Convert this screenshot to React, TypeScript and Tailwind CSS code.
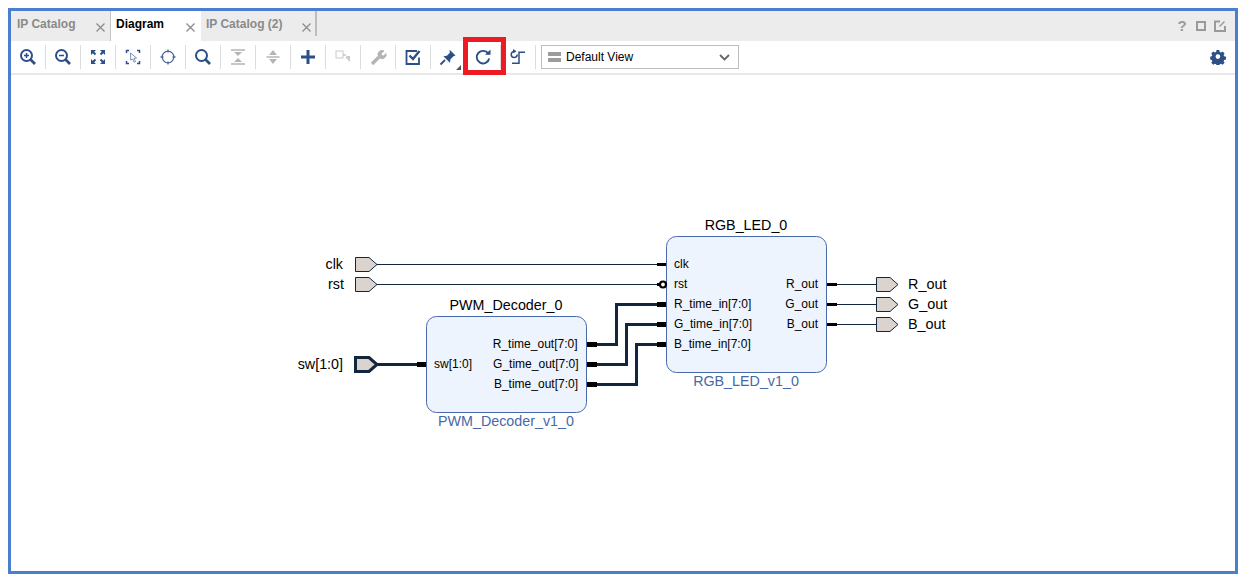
const NAVY = "#2b4f86";
const GREY = "#b4b4b4";

function Glyph({ children, color = NAVY }: { children: React.ReactNode; color?: string }) {
  return (
    <svg width="18" height="18" viewBox="0 0 18 18" fill="none" stroke={color} strokeWidth="2">
      {children}
    </svg>
  );
}

const tools: React.ReactNode[] = [
  <Glyph key="zoom-in">
    <circle cx="7.5" cy="7.5" r="5.5" />
    <path d="M5 7.5h5M7.5 5v5" strokeWidth="1.5" />
    <path d="M11.5 11.5l4.5 4.5" strokeWidth="2.6" />
  </Glyph>,
  <Glyph key="zoom-out">
    <circle cx="7.5" cy="7.5" r="5.5" />
    <path d="M5 7.5h5" strokeWidth="1.5" />
    <path d="M11.5 11.5l4.5 4.5" strokeWidth="2.6" />
  </Glyph>,
  <Glyph key="fit">
    <path d="M3 3l3.500 3.500M15 3l-3.500 3.500M3 15l3.500-3.500M15 15l-3.500-3.500" strokeWidth="2" />
    <path d="M2 2h5L2 7zM16 2h-5l5 5zM2 16h5l-5-5zM16 16h-5l5-5z" fill={NAVY} stroke="none" />
  </Glyph>,
  <Glyph key="fit-selection">
    <path d="M5 2.500H2.500V5M13 2.500h2.500V5M5 15.500H2.500V13M13 15.500h2.500V13" strokeWidth="1.500" />
    <path d="M6.500 5l6 5-2.600.4 1.700 3.200-1.400.7-1.600-3.200L6.700 12z" strokeWidth=".8" fill="#ffffff" stroke="#5a76a4" />
  </Glyph>,
  <Glyph key="target">
    <circle cx="9" cy="9" r="5.800" strokeWidth="1.300" stroke="#4a6a9c" />
    <path d="M9 1.500v3M9 13.500v3M1.500 9h3M13.500 9h3" strokeWidth="1.300" stroke="#4a6a9c" />
  </Glyph>,
  <Glyph key="search">
    <circle cx="7.5" cy="7.5" r="5.5" />
    <path d="M11.5 11.5l4.5 4.5" strokeWidth="2.6" />
  </Glyph>,
  <Glyph key="collapse" color={GREY}>
    <path d="M2 2h14M2 16h14" strokeWidth="1.5" />
    <path d="M5 4h8l-4 4zM5 14h8l-4-4z" fill={GREY} stroke="none" />
  </Glyph>,
  <Glyph key="expand" color={GREY}>
    <path d="M2.5 9h13" strokeWidth="1.5" />
    <path d="M5 7l4-5 4 5zM5 11l4 5 4-5z" fill={GREY} stroke="none" />
  </Glyph>,
  <Glyph key="add">
    <path d="M9 2v14M2 9h14" strokeWidth="3" />
  </Glyph>,
  <Glyph key="ports" color="#c8c8c8">
    <rect x="2" y="3" width="7" height="7" strokeWidth="1" />
    <path d="M9 7h3M12 9l4 4" strokeWidth="1.5" />
    <path d="M12 8h4v4z" fill="#c8c8c8" stroke="none" />
  </Glyph>,
  <Glyph key="wrench" color={GREY}>
    <path d="M3 16l7-7" strokeWidth="3.4" />
    <path d="M9 7a4 4 0 0 1 6-4l-3 2.500.6 2 2 .6L17 5.500a4 4 0 0 1-6 4.500z" fill={GREY} strokeWidth="1" />
  </Glyph>,
  <Glyph key="validate">
    <path d="M15 9.500V16H2.500V3H13" strokeWidth="1.800" />
    <path d="M5.500 7.500l3.500 3.500 6.500-8" strokeWidth="2.400" />
  </Glyph>,
  <div key="pin" className="relative flex h-[18px] w-[18px] items-center justify-center">
    <Glyph>
      <path d="M10.500 1.500l6 6-2 .8-3 3-.6 3.500-6.500-6.500 3.500-.6 3-3z" fill={NAVY} stroke="none" />
      <path d="M6 12l-4.500 4.500" strokeWidth="1.800" />
    </Glyph>
    <div className="absolute -bottom-[4px] -right-[4px] h-0 w-0 border-b-[5px] border-l-[5px] border-b-[#555555] border-l-transparent" />
  </div>,
  <Glyph key="refresh">
    <path d="M14.500 6A6.300 6.300 0 1 0 15.200 10.500" strokeWidth="1.900" />
    <path d="M11 6.800h5.500V1.500z" fill={NAVY} stroke="none" />
  </Glyph>,
  <Glyph key="regenerate">
    <circle cx="5.200" cy="6.500" r="3" strokeWidth="1.500" strokeDasharray="15 4" />
    <path d="M4 1l3.500 2.200L4 5.200z" fill={NAVY} stroke="none" />
    <path d="M3 15.300h7V4.200h6" strokeWidth="1.500" />
  </Glyph>,
];

function Tab({ label, active, width, closeGap }: { label: string; active?: boolean; width: string; closeGap: string }) {
  return (
    <div className={`flex h-full items-center justify-between pl-[5px] ${width} ${active ? "bg-white text-black" : "text-[#8a8a8a]"}`}>
      <span className="pb-[4px] text-[12px] font-bold">{label}</span>
      <svg width="9" height="9" viewBox="0 0 9 9" stroke="#8c8c8c" strokeWidth="1.300" className={`mt-[3px] ${closeGap}`}>
        <path d="M.5.5l8 8M8.500.5l-8 8" />
      </svg>
    </div>
  );
}

function Port({ x, y, thick }: { x: number; y: number; thick?: boolean }) {
  const p = `${x + 0.5},${y - 7} ${x + 14},${y - 7} ${x + 22},${y} ${x + 14},${y + 7} ${x + 0.5},${y + 7}`;
  return <polygon points={p} fill="#dbd3cd" stroke="#12263f" strokeWidth={thick ? 3 : 1} />;
}

function Block({ x, y, w, h, title, sub, titleY, subY }: { x: number; y: number; w: number; h: number; title: string; sub: string; titleY: number; subY: number }) {
  return (
    <g textAnchor="middle" fontSize="14.3">
      <rect x={x} y={y} width={w} height={h} rx="10" fill="#edf4fd" stroke="#4769a8" strokeWidth="1" />
      <text x={x + w / 2 - 0.5} y={titleY} fill="#000000">{title}</text>
      <text x={x + w / 2 - 0.5} y={subY} fill="#4769a8">{sub}</text>
    </g>
  );
}

function Diagram() {
  return (
    <svg className="block h-full w-full" viewBox="11 75 1224 496" fontFamily="'Liberation Sans', Arial, sans-serif" fill="none">
      {/* thin nets */}
      <g stroke="#12263f" strokeWidth="1">
        <path d="M376 264.500H658M376 284.500H658M837 284.500H876M837 304.500H876M837 324.500H876" />
      </g>
      {/* bus nets */}
      <g stroke="#12263f" strokeWidth="3">
        <path d="M376 364.500H418M597 344.500H616.500V304.500H657M597 364.500H626.500V324.500H657M597 384.500H636.500V344.500H657" />
      </g>
      <Block x={426.5} y={316.5} w={160} h={96} title="PWM_Decoder_0" sub="PWM_Decoder_v1_0" titleY={310} subY={426} />
      <Block x={666.5} y={236.5} w={160} h={136} title="RGB_LED_0" sub="RGB_LED_v1_0" titleY={230} subY={386} />

      {/* pin stubs */}
      <g stroke="#000000" strokeWidth="5">
        <path d="M417 364.500H426M587 344.500H597M587 364.500H597M587 384.500H597M657 304.500H666M657 324.500H666M657 344.500H666" />
      </g>
      <g stroke="#000000" strokeWidth="3">
        <path d="M657 264.500H666M827 284.500H837M827 304.500H837M827 324.500H837" />
      </g>
      <path d="M657 284.500H661" stroke="#000000" strokeWidth="3" />
      <circle cx="663" cy="284.500" r="3" fill="#ffffff" stroke="#000000" strokeWidth="2.200" />

      <Port x={355} y={264.5} />
      <Port x={355} y={284.5} />
      <Port x={355} y={364.5} thick />
      <Port x={876} y={284.5} />
      <Port x={876} y={304.5} />
      <Port x={876} y={324.5} />

      <g fontSize="14.3" fill="#000000" textAnchor="end">
        <text x="343" y="269">clk</text>
        <text x="344" y="289">rst</text>
        <text x="343" y="369">sw[1:0]</text>
      </g>
      <g fontSize="14.4" fill="#000000">
        <text x="908" y="289">R_out</text>
        <text x="908" y="309">G_out</text>
        <text x="908" y="329">B_out</text>
      </g>
      <g fontSize="12" fill="#000000">
        <text x="434" y="368">sw[1:0]</text>
        <text x="674" y="268">clk</text>
        <text x="674" y="288">rst</text>
        <text x="674" y="308">R_time_in[7:0]</text>
        <text x="674" y="328">G_time_in[7:0]</text>
        <text x="674" y="348">B_time_in[7:0]</text>
      </g>
      <g fontSize="12" fill="#000000" textAnchor="end">
        <text x="577.500" y="348">R_time_out[7:0]</text>
        <text x="578.500" y="368">G_time_out[7:0]</text>
        <text x="578" y="388">B_time_out[7:0]</text>
        <text x="818" y="288">R_out</text>
        <text x="818" y="308">G_out</text>
        <text x="818" y="328">B_out</text>
      </g>
    </svg>
  );
}

export default function App() {
  return (
    <div className="h-[579px] w-[1242px] bg-white pb-[5px] pl-[8px] pr-[4px] pt-[8px] font-['Liberation_Sans',Arial,sans-serif]">
      <div className="flex h-full flex-col border-[3px] border-[#4a7fd0]">
        {/* tab strip */}
        <div className="flex h-[30px] shrink-0 items-stretch justify-between bg-[#ececec]">
          <div className="flex items-stretch">
            <div className="flex items-stretch border-r border-[#c4c4c4]">
              <div className="flex items-stretch pl-[1px]">
                <Tab label="IP Catalog" width="w-[98px]" closeGap="mr-[5px]" />
              </div>
            </div>
            <Tab label="Diagram" active width="w-[90px]" closeGap="mr-[6px]" />
            <div className="mb-[5px] flex items-stretch border-r-2 border-[#bdbdbd]">
              <div className="-mb-[5px] flex items-stretch">
                <Tab label="IP Catalog (2)" width="w-[114px]" closeGap="mr-[4px]" />
              </div>
            </div>
          </div>
          <div className="flex items-center gap-[8px] pr-[9px]">
            <span className="w-[12px] text-center text-[15px] font-bold text-[#9a9a9a]">?</span>
            <div className="h-[10px] w-[10px] border-2 border-[#9a9a9a]" />
            <svg width="12" height="12" viewBox="0 0 12 12" fill="none" stroke="#9a9a9a" strokeWidth="2">
              <path d="M6 1.500H1v9.500h10V6" />
              <path d="M5.500 6.500L10.500 1.500" strokeWidth="1.500" />
            </svg>
          </div>
        </div>

        {/* toolbar */}
        <div className="flex h-[34px] shrink-0 items-center border-b-2 border-[#e8e8e8] bg-white">
          {tools.map((icon, i) => (
            <div key={i} className="flex h-[24px] w-[35px] shrink-0 items-center justify-center border-r border-[#dcdcdc]">
              {icon}
            </div>
          ))}
          <div className="relative ml-[5px] flex h-[24px] w-[198px] items-center border border-[#bfbfbf] pl-[6px] pr-[8px]">
            <div className="flex flex-col gap-[2px]">
              <div className="h-[4px] w-[13px] bg-[#9c9c9c]" />
              <div className="h-[4px] w-[13px] bg-[#9c9c9c]" />
            </div>
            <span className="ml-[5px] flex-1 text-[12px] text-black">Default View</span>
            <svg width="11" height="7" viewBox="0 0 11 7" fill="none" stroke="#666666" strokeWidth="1.800">
              <path d="M1 1l4.500 4.500L10 1" />
            </svg>
          </div>
          <div className="ml-auto mr-[9px]">
            <svg width="16" height="16" viewBox="0 0 16 16">
              <path
                fill={NAVY}
                fillRule="evenodd"
                d="M6.500 1h3l.4 2 1.400.6 1.700-1.100 2.100 2.100-1.100 1.700.6 1.400 2 .4v3l-2 .4-.6 1.400 1.100 1.700-2.100 2.100-1.700-1.100-1.400.6-.4 1.600h-3l-.4-1.600-1.400-.6-1.700 1.100-2.100-2.100 1.100-1.700-.6-1.400-1.600-.4v-3l1.600-.4.600-1.400-1.100-1.700 2.100-2.100 1.700 1.100 1.400-.6zM8 5.500a2.500 2.500 0 1 0 0 5 2.500 2.500 0 0 0 0-5z"
                transform="translate(.4 .1) scale(.94)"
              />
            </svg>
          </div>
        </div>

        <div className="min-h-0 flex-1 bg-white">
          <Diagram />
        </div>
      </div>
      {/* red highlight around the refresh button */}
      <div className="absolute left-[463px] top-[37px] h-[38px] w-[43px] border-[5px] border-[#ed1c24]" />
    </div>
  );
}
